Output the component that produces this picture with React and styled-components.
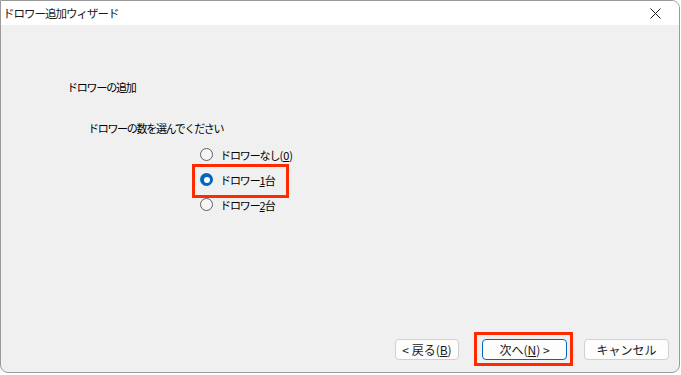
import styled, { createGlobalStyle } from 'styled-components';

const GlobalStyle = createGlobalStyle`
  html, body {
    margin: 0;
    padding: 0;
    background: #ffffff;
  }
`;

const uiFont = `"Noto Sans CJK JP", "Noto Sans", sans-serif`;

const options = [
  { label: 'ドロワーなし', key: '0', paren: true },
  { label: 'ドロワー', key: '1', tail: '台', checked: true },
  { label: 'ドロワー', key: '2', tail: '台' },
];

const App = () => {
  return (
    <>
      <GlobalStyle />
      <Window>
        <TitleBar>
          <Title>ドロワー追加ウィザード</Title>
          <CloseButton aria-label="close">
            <svg width="11" height="11" viewBox="0 0 11 11">
              <path d="M0.5 0.5 L10.5 10.5 M10.5 0.5 L0.5 10.5" stroke="#1a1a1a" strokeWidth="1" fill="none" />
            </svg>
          </CloseButton>
        </TitleBar>
        <Body>
          <Heading>ドロワーの追加</Heading>
          <Prompt>ドロワーの数を選んでください</Prompt>
          <RadioList>
            {options.map((o, i) => (
              <RadioRow key={i} highlight={o.checked}>
                <RadioDot checked={o.checked} />
                <RadioLabel>
                  {o.label}
                  {o.paren ? <Paren>(<Key>{o.key}</Key>)</Paren> : <Key>{o.key}</Key>}
                  {o.tail}
                </RadioLabel>
              </RadioRow>
            ))}
          </RadioList>
          <ButtonRow>
            <Button width={64}>&lt; 戻る(<Key>B</Key>)</Button>
            <Button width={85} primary highlight>次へ(<Key>N</Key>) &gt;</Button>
            <Button width={85} last>キャンセル</Button>
          </ButtonRow>
        </Body>
      </Window>
    </>
  );
};

export default App;

const Window = styled.div`
  box-sizing: border-box;
  width: 680px;
  height: 373px;
  border: 1px solid #9a9a9a;
  border-radius: 0 8px 8px 8px;
  overflow: hidden;
  display: flex;
  flex-direction: column;
  background: #f0f0f0;
`;

const TitleBar = styled.div`
  height: 24px;
  background: #ffffff;
  display: flex;
  align-items: center;
  justify-content: space-between;
  padding-left: 2px;
`;

const Title = styled.div`
  font-family: ${uiFont};
  font-size: 11.5px;
  color: #1a1a1a;
  letter-spacing: -1px;
`;

const CloseButton = styled.div`
  width: 46px;
  height: 24px;
  display: flex;
  align-items: center;
  justify-content: center;
  margin-right: 1px;
`;

const Body = styled.div`
  flex: 1;
  display: flex;
  flex-direction: column;
  padding: 0 10px 12px 66px;
  font-family: ${uiFont};
  color: #000;
`;

const Heading = styled.div`
  font-size: 11px;
  line-height: 16px;
  letter-spacing: -1.2px;
  margin-top: 54px;
`;

const Prompt = styled.div`
  font-size: 11px;
  line-height: 16px;
  letter-spacing: -1.3px;
  margin-top: 25px;
  margin-left: 21px;
`;

const RadioList = styled.div`
  display: flex;
  flex-direction: column;
  margin-top: 6px;
  margin-left: 133px;
`;

const RadioRow = styled.div`
  position: relative;
  height: 25px;
  display: flex;
  align-items: center;
  gap: 7px;
  ${({ highlight }) => highlight && `
    &::after {
      content: '';
      position: absolute;
      left: -8px;
      top: -3px;
      width: 97px;
      height: 34px;
      box-sizing: border-box;
      border: 3.5px solid #ff2a00;
    }
  `}
`;

const RadioDot = styled.span`
  box-sizing: border-box;
  width: 13px;
  height: 13px;
  border-radius: 50%;
  position: relative;
  border: ${({ checked }) => (checked ? 'none' : '1px solid #5f5f5f')};
  background: ${({ checked }) => (checked ? '#0067c0' : '#f6f6f6')};
  &::after {
    content: '';
    display: ${({ checked }) => (checked ? 'block' : 'none')};
    position: absolute;
    left: 3.5px;
    top: 3.5px;
    width: 6px;
    height: 6px;
    border-radius: 50%;
    background: #ffffff;
  }
`;

const RadioLabel = styled.span`
  font-size: 11px;
  line-height: 16px;
  letter-spacing: -1.1px;
`;

const Paren = styled.span`
  letter-spacing: 0;
`;

const Key = styled.u`
  text-decoration: underline;
  text-underline-offset: 1px;
`;

const ButtonRow = styled.div`
  margin-top: auto;
  display: flex;
  justify-content: flex-end;
  align-items: center;
  gap: 23px;
`;

const Button = styled.div`
  position: relative;
  box-sizing: border-box;
  width: ${({ width }) => width}px;
  height: 21px;
  margin-left: ${({ last }) => (last ? '-6px' : '0')};
  background: #fdfdfd;
  border: 1px solid ${({ primary }) => (primary ? '#0067c0' : '#d0d0d0')};
  border-radius: 4px;
  display: flex;
  align-items: center;
  justify-content: center;
  font-size: 12px;
  color: #1a1a1a;
  ${({ highlight }) => highlight && `
    &::after {
      content: '';
      position: absolute;
      left: -9px;
      top: -8px;
      width: 99px;
      height: 34px;
      box-sizing: border-box;
      border: 3.5px solid #ff2a00;
    }
  `}
`;
